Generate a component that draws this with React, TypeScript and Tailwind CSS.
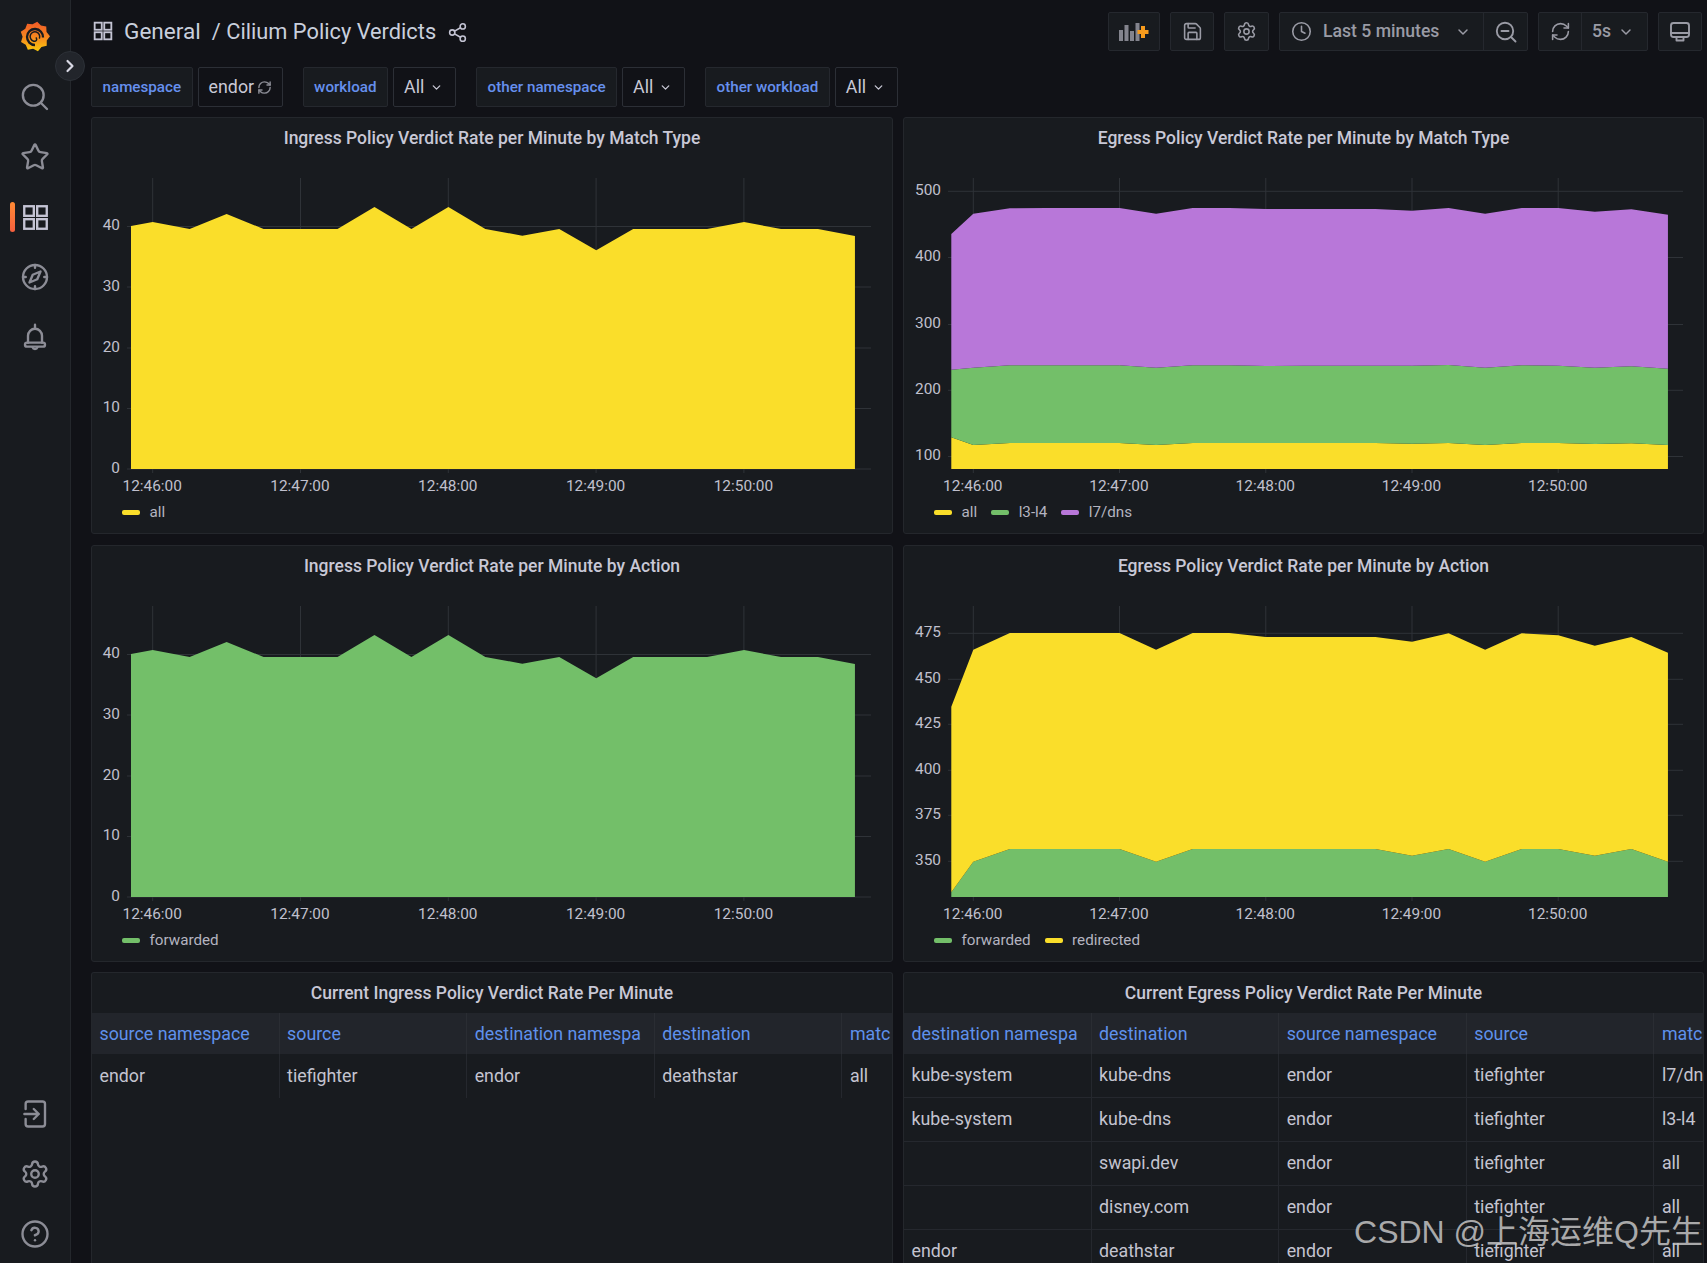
import React from "react";
import { Star, Settings, CircleHelp, Share2, Clock, RefreshCw, Save, ChevronDown, ChevronRight } from "lucide-react";

const Y = "#fade2a";
const G = "#73bf69";
const P = "#b877d9";

const xsA = Array.from({ length: 21 }, (_, i) => (i === 0 ? 131 : 152.7 + (i - 1) * 36.96));
const xsB = Array.from({ length: 21 }, (_, i) => (i === 0 ? 951.3 : 973.3 + (i - 1) * 36.56));

const ingress = [226, 222, 229, 214, 229, 229, 229, 207, 229, 207, 229, 235.7, 229, 250.3, 229, 229, 229, 222, 229, 229, 236];
const eAll = [437.3, 445, 443, 443, 443, 443, 445, 443, 443, 443, 443, 443, 443, 443.7, 443, 445, 443, 443, 444, 443.3, 445];
const eL3 = [369.7, 367.7, 365.3, 365.3, 365.3, 365.3, 367.7, 365.3, 365.3, 366, 365.7, 365.7, 365.7, 365.7, 365, 367.7, 365.3, 365.7, 367.7, 366.3, 368.7];
const eL7 = [234, 213.7, 208.3, 208, 208, 208, 213.7, 208, 208, 209, 209, 209, 209, 210.7, 208, 213.7, 208, 208, 211.7, 209.3, 214.7];
const aFwd = [892.3, 861.7, 849, 849, 849, 849, 861.7, 849, 849, 849, 849, 849, 849, 855.7, 849, 861.7, 849, 849, 855.7, 849, 861.7];
const aRed = [706.7, 649.7, 633, 633, 633, 633, 649.7, 633, 633, 637, 637, 637, 637, 641.7, 633.3, 649.7, 633.3, 635.3, 645.7, 637, 652.7];

function area(xs: number[], top: number[], bottom: number[] | number) {
  const up = xs.map((x, i) => `${x},${top[i]}`);
  const down = xs
    .map((x, i) => `${x},${typeof bottom === "number" ? bottom : bottom[i]}`)
    .reverse();
  return [...up, ...down].join(" ");
}

type ChartProps = {
  x0: number;
  y0: number;
  width: number;
  gridLeft: number;
  gridRight: number;
  labelX: number;
  ticks: [string, number][];
  xTicks: number[];
  bottom: number;
  areas: { points: string; color: string }[];
};

function Chart({ x0, y0, width, gridLeft, gridRight, labelX, ticks, xTicks, bottom, areas }: ChartProps) {
  const times = ["12:46:00", "12:47:00", "12:48:00", "12:49:00", "12:50:00"];
  return (
    <svg
      viewBox={`${x0} ${y0} ${width} 335`}
      className="block h-[335px] w-full shrink-0"
      fontFamily="Roboto, sans-serif"
      fontSize="15.4"
    >
      {ticks.map(([, y]) => (
        <line key={y} x1={gridLeft} x2={gridRight} y1={y} y2={y} stroke="#2f3338" />
      ))}
      {xTicks.map((x) => (
        <line key={x} x1={x} x2={x} y1={y0 + 18} y2={bottom + 4} stroke="#2f3338" />
      ))}
      {areas.map((a) => (
        <polygon key={a.color + a.points.length} points={a.points} fill={a.color} />
      ))}
      {ticks.map(([label, y]) => (
        <text key={label} x={labelX} y={y + 3.5} textAnchor="end" fill="#c0c0cd">
          {label}
        </text>
      ))}
      {xTicks.map((x, i) => (
        <text key={x} x={x - 0.5} y={bottom + 22} textAnchor="middle" fill="#c0c0cd">
          {times[i]}
        </text>
      ))}
    </svg>
  );
}

function Legend({ items }: { items: [string, string][] }) {
  return (
    <div className="mt-[6px] flex h-[22px] items-center gap-[14px] pl-[30px] text-[15.2px] text-[#b4b4c0]">
      {items.map(([label, color]) => (
        <div key={label} className="flex items-center gap-[9.5px]">
          <span className="h-[5px] w-[18px] rounded-[2px]" style={{ background: color }} />
          <span>{label}</span>
        </div>
      ))}
    </div>
  );
}

function Panel({ title, children }: { title: string; children: React.ReactNode }) {
  return (
    <section className="h-[417px] overflow-hidden rounded-[3px] border border-[#24272c] bg-[#181b1f]">
      <h2 className="flex h-[42px] items-center justify-center pb-[2px] text-[17.5px] font-medium text-[#c8c8d6]">
        {title}
      </h2>
      {children}
    </section>
  );
}

function Table({ title, head, rows, bordered }: { title: string; head: string[]; rows: string[][]; bordered: boolean }) {
  return (
    <section className="-mt-[1px] h-[320px] overflow-hidden rounded-t-[3px] border border-b-0 border-[#24272c] bg-[#181b1f]">
      <h2 className="flex h-[40px] items-center justify-center text-[17.5px] font-medium text-[#c8c8d6]">
        {title}
      </h2>
      <div className="grid h-[41px] w-[940px] grid-cols-[repeat(5,187.6px)] bg-[#22252b] text-[17.8px] text-[#5f91ec]">
        {head.map((h) => (
          <div key={h} className="flex items-center overflow-hidden whitespace-nowrap border-r border-[#2a2d33] pl-[7.5px] pt-[2px]">
            {h}
          </div>
        ))}
      </div>
      {rows.map((r, i) => (
        <div
          key={i}
          className={`grid h-[44px] w-[940px] grid-cols-[repeat(5,187.6px)] text-[17.8px] text-[#c4c4d0] ${bordered ? "border-b border-[#25282e]" : ""}`}
        >
          {r.map((c, j) => (
            <div key={j} className="flex items-center overflow-hidden whitespace-nowrap border-r border-[#25282e] pl-[7.5px]">
              {c}
            </div>
          ))}
        </div>
      ))}
    </section>
  );
}

function AppsIcon({ size, sw, className }: { size: number; sw: number; className?: string }) {
  return (
    <svg width={size} height={size} viewBox="0 0 24 24" fill="none" stroke="currentColor" strokeWidth={sw} className={className}>
      <rect x="2" y="2" width="8.5" height="8.5" />
      <rect x="13.5" y="2" width="8.5" height="8.5" />
      <rect x="2" y="13.5" width="8.5" height="8.5" />
      <rect x="13.5" y="13.5" width="8.5" height="8.5" />
    </svg>
  );
}

function Logo() {
  const pts: string[] = [];
  const n = 9;
  for (let i = 0; i < n * 2; i++) {
    const a = (i * Math.PI) / n - Math.PI / 2 + 0.15;
    const r = i % 2 === 0 ? 15 : 12.4;
    pts.push(`${15 + r * Math.cos(a)},${15.5 + r * Math.sin(a)}`);
  }
  return (
    <svg width="30" height="32" viewBox="0 0 30 32">
      <defs>
        <linearGradient id="grafana" x1="0" y1="0" x2="0" y2="1">
          <stop offset="0" stopColor="#f05a28" />
          <stop offset="0.55" stopColor="#f68a1f" />
          <stop offset="1" stopColor="#fbca0a" />
        </linearGradient>
      </defs>
      <polygon points={pts.join(" ")} fill="url(#grafana)" />
      <path d="M23 16.5a8 8 0 1 0-8 7.5" fill="none" stroke="#181b1f" strokeWidth="2.3" />
      <path d="M19.5 17a4.8 4.8 0 1 0-5.8 3.2c2.6.5 3.6-1.6 2.6-3.2" fill="none" stroke="#181b1f" strokeWidth="1.5" strokeLinecap="round" />
    </svg>
  );
}

const sideIcon = "h-[30px] w-[30px] text-[#8c8d96]";

function SideItem({ children }: { children: React.ReactNode }) {
  return <div className="flex h-[60px] w-full items-center justify-center">{children}</div>;
}

function Stroke({ children, className = sideIcon }: { children: React.ReactNode; className?: string }) {
  return (
    <svg viewBox="0 0 24 24" fill="none" stroke="currentColor" strokeWidth="1.9" strokeLinecap="round" strokeLinejoin="round" className={className}>
      {children}
    </svg>
  );
}

function Sidebar() {
  return (
    <aside className="relative flex w-[71px] shrink-0 flex-col items-center border-r border-[#24272c] bg-[#181b1f]">
      <div className="flex h-[67px] w-full items-center justify-center pt-[6px]">
        <Logo />
      </div>
      <SideItem>
        <Stroke>
          <circle cx="10.6" cy="10.6" r="8.3" />
          <path d="M16.6 16.6 21.6 21.6" />
        </Stroke>
      </SideItem>
      <SideItem>
        <Star className={sideIcon} strokeWidth={1.9} />
      </SideItem>
      <div className="relative flex h-[60px] w-full items-center justify-center">
        <span className="absolute left-[10px] top-[15px] h-[30px] w-[5px] rounded-[3px] bg-gradient-to-b from-[#ff8a33] to-[#f55f3e]" />
        <AppsIcon size={27} sw={2.1} className="text-[#c4c4d4]" />
      </div>
      <SideItem>
        <Stroke>
          <circle cx="12" cy="12" r="9.6" />
          <path d="M12 2.4v2.2M12 19.4v2.2M2.4 12h2.2M19.4 12h2.2" />
          <path d="M16.4 7.6 13.8 13.8 7.6 16.4 10.2 10.2Z" />
        </Stroke>
      </SideItem>
      <SideItem>
        <Stroke>
          <path d="M12 2.2v2" />
          <path d="M6.4 16.5V11a5.6 5.6 0 0 1 11.2 0v5.5" />
          <path d="M5.6 16.5h12.8a1.6 1.6 0 0 1 0 3.2H5.6a1.6 1.6 0 0 1 0-3.2Z" />
          <path d="M10 20.2a2.1 2.1 0 0 0 4 0" />
        </Stroke>
      </SideItem>
      <div className="flex-1" />
      <SideItem>
        <Stroke>
          <path d="M4.5 8V4a2 2 0 0 1 2-2h11.5a2 2 0 0 1 2 2v16a2 2 0 0 1-2 2H6.5a2 2 0 0 1-2-2v-4" />
          <path d="M3.5 12H15M11 8l4 4-4 4" />
        </Stroke>
      </SideItem>
      <SideItem>
        <Settings className={sideIcon} strokeWidth={1.9} />
      </SideItem>
      <SideItem>
        <CircleHelp className={sideIcon} strokeWidth={1.9} />
      </SideItem>
      <div className="-mb-[1px]" />
      <button className="absolute left-[55px] top-[51px] flex h-[30px] w-[30px] items-center justify-center rounded-full border border-[#2c3037] bg-[#22252b] text-[#d8d8e4]">
        <ChevronRight size={20} strokeWidth={2.6} />
      </button>
    </aside>
  );
}

function ToolBox({ className, children }: { className: string; children: React.ReactNode }) {
  return (
    <div className={`flex h-[39px] items-center justify-center rounded-[2px] border border-[#25282e] bg-[#181b1f] text-[#9a9ba5] ${className}`}>
      {children}
    </div>
  );
}

function Header() {
  return (
    <header className="flex h-[52px] shrink-0 items-start pl-[2px] pr-[2px] pt-[12px]">
      <AppsIcon size={20} sw={2.2} className="mt-[9px] text-[#c4c4d4]" />
      <span className="ml-[11px] mt-[5px] text-[22.6px] leading-[30px] text-[#c9cfdd]">General</span>
      <span className="ml-[11px] mt-[5px] text-[21.8px] leading-[30px] text-[#c9cfdd]">/ Cilium Policy Verdicts</span>
      <Share2 size={21} strokeWidth={1.8} className="ml-[11px] mt-[10px] text-[#c4c4d4]" />
      <div className="flex-1" />
      <ToolBox className="w-[52px]">
        <svg width="32" height="20" viewBox="0 0 32 20">
          <g fill="#83848d">
            <rect x="1" y="8" width="4" height="11" />
            <rect x="6.5" y="3" width="4" height="16" />
            <rect x="12" y="9" width="4" height="10" />
            <rect x="17.5" y="1" width="4" height="18" />
          </g>
          <path d="M25 4v12M19.5 10h11" stroke="#f79b1c" strokeWidth="4" />
        </svg>
      </ToolBox>
      <ToolBox className="ml-[10px] w-[44px]">
        <Save size={21} strokeWidth={1.8} />
      </ToolBox>
      <ToolBox className="ml-[10px] w-[45px]">
        <Settings size={21} strokeWidth={1.8} />
      </ToolBox>
      <div className="ml-[10px] flex h-[39px] w-[249px] items-center rounded-[2px] border border-[#25282e] bg-[#181b1f] text-[#9a9ba5]">
        <div className="flex h-full w-[204px] items-center border-r border-[#25282e] pl-[11px]">
          <Clock size={21} strokeWidth={1.8} />
          <span className="ml-[11px] text-[17.6px] font-medium">Last 5 minutes</span>
          <ChevronDown size={16} strokeWidth={2.2} className="ml-[16px]" />
        </div>
        <div className="flex flex-1 items-center justify-center">
          <ZoomIcon />
        </div>
      </div>
      <div className="ml-[10px] flex h-[39px] w-[110px] items-center rounded-[2px] border border-[#25282e] bg-[#181b1f] text-[#9a9ba5]">
        <div className="flex h-full w-[43px] items-center justify-center border-r border-[#25282e]">
          <RefreshCw size={21} strokeWidth={1.8} />
        </div>
        <span className="ml-[10px] text-[17.6px] font-medium">5s</span>
        <ChevronDown size={16} strokeWidth={2.2} className="ml-[7px]" />
      </div>
      <ToolBox className="ml-[10px] w-[44px]">
        <Stroke className="h-[24px] w-[24px]">
          <rect x="3" y="3" width="18" height="14" rx="2.5" />
          <path d="M3 13h18M8.5 17v3.5h7V17" />
        </Stroke>
      </ToolBox>
    </header>
  );
}

function ZoomIcon() {
  return (
    <Stroke className="h-[24px] w-[24px]">
      <circle cx="11" cy="11" r="8.2" />
      <path d="M7.5 11h7M17 17l4.5 4.5" />
    </Stroke>
  );
}

function Variable({ label, value, spin, valueW }: { label: string; value: string; spin?: boolean; valueW: string }) {
  return (
    <div className="flex gap-[5px]">
      <div className="flex h-[40px] items-center rounded-[2px] border border-[#25282e] bg-[#181b1f] px-[10.5px] text-[15.2px] font-medium text-[#6690ee]">
        {label}
      </div>
      <div className={`flex h-[40px] items-center rounded-[2px] border border-[#2c2f36] bg-[#111217] pl-[10px] text-[17.8px] text-[#c9c9d6] ${valueW}`}>
        {value}
        {spin ? (
          <RefreshCw size={15} strokeWidth={2.3} className="ml-[3px] text-[#8c8d96]" />
        ) : (
          <ChevronDown size={13} strokeWidth={2.4} className="ml-[6px] text-[#c9c9d6]" />
        )}
      </div>
    </div>
  );
}

const hIn = ["source namespace", "source", "destination namespa", "destination", "matc"];
const hEg = ["destination namespa", "destination", "source namespace", "source", "matc"];
const egRows = [
  ["kube-system", "kube-dns", "endor", "tiefighter", "l7/dn"],
  ["kube-system", "kube-dns", "endor", "tiefighter", "l3-l4"],
  ["", "swapi.dev", "endor", "tiefighter", "all"],
  ["", "disney.com", "endor", "tiefighter", "all"],
  ["endor", "deathstar", "endor", "tiefighter", "all"],
];

export default function App() {
  const xTicksA = [152.7, 300.5, 448.3, 596.1, 743.9];
  const xTicksB = [973.3, 1119.5, 1265.8, 1412, 1558.2];
  const ticksA: [string, number][] = [["40", 226.5], ["30", 287], ["20", 348], ["10", 408.5], ["0", 469]];
  const ticksB: [string, number][] = [["500", 191.3], ["400", 257.5], ["300", 324.5], ["200", 390.3], ["100", 456.5]];
  const ticksD: [string, number][] = [["475", 633.3], ["450", 679.3], ["425", 724.3], ["400", 770.3], ["375", 815.3], ["350", 861.3]];
  return (
    <div className="flex h-[1263px] w-[1707px] overflow-hidden bg-[#111217] font-['Roboto',sans-serif]">
      <Sidebar />
      <main className="relative flex min-w-0 flex-1 flex-col pl-[20px] pr-[3px]">
        <Header />
        <div className="mt-[15px] flex h-[40px] shrink-0 gap-[20px]">
          <Variable label="namespace" value="endor" spin valueW="w-[85px]" />
          <Variable label="workload" value="All" valueW="w-[63px]" />
          <Variable label="other namespace" value="All" valueW="w-[63px]" />
          <Variable label="other workload" value="All" valueW="w-[63px]" />
        </div>
        <div className="mt-[10px] grid grid-cols-[802px_801px] gap-x-[10px] gap-y-[11px]">
          <Panel title="Ingress Policy Verdict Rate per Minute by Match Type">
            <Chart x0={92} y0={160} width={800} gridLeft={127} gridRight={871} labelX={120} ticks={ticksA} xTicks={xTicksA} bottom={469}
              areas={[{ points: area(xsA, ingress, 469), color: Y }]} />
            <Legend items={[["all", Y]]} />
          </Panel>
          <Panel title="Egress Policy Verdict Rate per Minute by Match Type">
            <Chart x0={904} y0={160} width={799} gridLeft={948} gridRight={1683} labelX={941} ticks={ticksB} xTicks={xTicksB} bottom={469}
              areas={[
                { points: area(xsB, eAll, 469), color: Y },
                { points: area(xsB, eL3, eAll), color: G },
                { points: area(xsB, eL7, eL3), color: P },
              ]} />
            <Legend items={[["all", Y], ["l3-l4", G], ["l7/dns", P]]} />
          </Panel>
          <Panel title="Ingress Policy Verdict Rate per Minute by Action">
            <Chart x0={92} y0={160} width={800} gridLeft={127} gridRight={871} labelX={120} ticks={ticksA} xTicks={xTicksA} bottom={469}
              areas={[{ points: area(xsA, ingress, 469), color: G }]} />
            <Legend items={[["forwarded", G]]} />
          </Panel>
          <Panel title="Egress Policy Verdict Rate per Minute by Action">
            <Chart x0={904} y0={588} width={799} gridLeft={948} gridRight={1683} labelX={941} ticks={ticksD} xTicks={xTicksB} bottom={897}
              areas={[
                { points: area(xsB, aFwd, 897), color: G },
                { points: area(xsB, aRed, aFwd), color: Y },
              ]} />
            <Legend items={[["forwarded", G], ["redirected", Y]]} />
          </Panel>
          <Table title="Current Ingress Policy Verdict Rate Per Minute" head={hIn} rows={[["endor", "tiefighter", "endor", "deathstar", "all"]]} bordered={false} />
          <Table title="Current Egress Policy Verdict Rate Per Minute" head={hEg} rows={egRows} bordered />
        </div>
        <div className="pointer-events-none absolute bottom-[11px] right-[4px] whitespace-nowrap font-['Liberation_Sans','Noto_Sans_CJK_SC',sans-serif] text-[32px] leading-[40px] text-[#c4c4c4]/85">
          CSDN @上海运维Q先生
        </div>
      </main>
    </div>
  );
}
